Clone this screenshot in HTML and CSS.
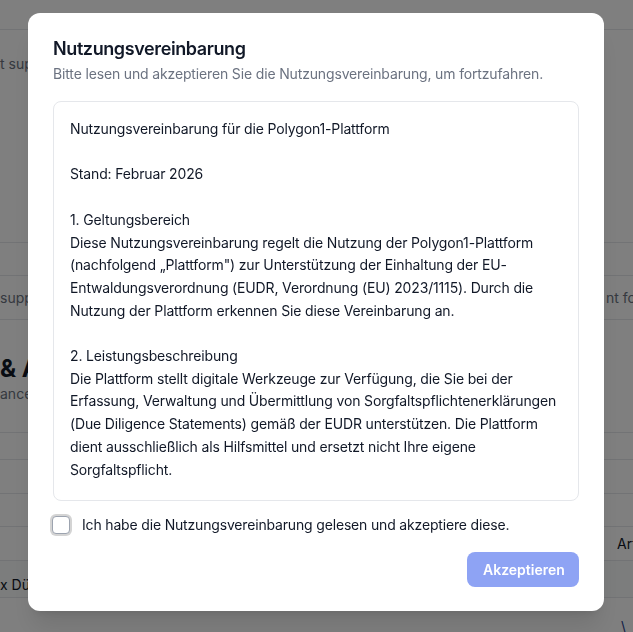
FILE: index.html
```html
<!DOCTYPE html>
<html lang="de">
<head>
<meta charset="utf-8">
<title>Nutzungsvereinbarung</title>
<link rel="stylesheet" href="styles.css">
</head>
<body>
<div class="page">
  <div class="row row-top"></div>
  <div class="row row-intro"><span class="muted">t support</span></div>
  <div class="row row-a"></div>
  <div class="row row-b"><span class="muted">support</span><span class="muted right-text">nt for</span></div>
  <div class="row row-heading">
    <div class="heading">&amp; Analysen</div>
    <div class="muted">ance</div>
  </div>
  <div class="row row-c"></div>
  <div class="row row-d"></div>
  <div class="row row-e"></div>
  <div class="row row-f"><span></span><span class="dark">Artikel</span></div>
  <div class="row row-g"><span class="dark">x Düngemittel</span></div>
  <div class="row row-h"><span></span><span class="link">\</span></div>
</div>

<div class="overlay">
  <div class="modal">
    <h2 class="modal-title">Nutzungsvereinbarung</h2>
    <p class="modal-subtitle">Bitte lesen und akzeptieren Sie die Nutzungsvereinbarung, um fortzufahren.</p>
    <div class="terms">Nutzungsvereinbarung für die Polygon1-Plattform

Stand: Februar 2026

1. Geltungsbereich
Diese Nutzungsvereinbarung regelt die Nutzung der Polygon1-Plattform (nachfolgend „Plattform") zur Unterstützung der Einhaltung der EU-Entwaldungsverordnung (EUDR, Verordnung (EU) 2023/1115). Durch die Nutzung der Plattform erkennen Sie diese Vereinbarung an.

2. Leistungsbeschreibung
Die Plattform stellt digitale Werkzeuge zur Verfügung, die Sie bei der Erfassung, Verwaltung und Übermittlung von Sorgfaltspflichtenerklärungen (Due Diligence Statements) gemäß der EUDR unterstützen. Die Plattform dient ausschließlich als Hilfsmittel und ersetzt nicht Ihre eigene Sorgfaltspflicht.

3. Registrierung und Zugang
Für die Nutzung der Plattform ist eine Registrierung erforderlich.</div>
    <label class="consent">
      <span class="checkbox"></span>
      <span class="consent-text">Ich habe die Nutzungsvereinbarung gelesen und akzeptiere diese.</span>
    </label>
    <div class="actions">
      <button class="btn-primary" disabled>Akzeptieren</button>
    </div>
  </div>
</div>
</body>
</html>
```

FILE: styles.css
```css
* { box-sizing: border-box; }

html, body {
  margin: 0;
  padding: 0;
  width: 633px;
  height: 632px;
  overflow: hidden;
  font-family: Inter, "Liberation Sans", sans-serif;
  background: #ffffff;
  color: #111827;
}

/* background page */
.page {
  display: flex;
  flex-direction: column;
  width: 633px;
}

.row {
  display: flex;
  justify-content: space-between;
  align-items: center;
  border-bottom: 1px solid #e5e7eb;
  font-size: 14px;
  line-height: 20px;
  white-space: nowrap;
  overflow: hidden;
}

.row-top { height: 30px; }
.row-intro { height: 213px; align-items: flex-start; padding-top: 24px; }
.row-a { height: 33px; }
.row-b { height: 44px; }
.row-b .right-text { width: 27px; overflow: hidden; }
.row-heading {
  height: 113px;
  flex-direction: column;
  align-items: flex-start;
  justify-content: flex-start;
  padding-top: 34px;
}
.row-c { height: 27px; }
.row-d { height: 34px; }
.row-e { height: 33px; }
.row-f { height: 34px; }
.row-f .dark { width: 16px; overflow: hidden; }
.row-g { height: 37px; background: #f9fafb; align-items: flex-end; padding-bottom: 2px; }
.row-h { height: 40px; align-items: flex-end; }
.row-h .link { width: 12px; color: #1e3a8a; }

.muted { color: #6b7280; }
.dark { color: #111827; }
.heading {
  font-size: 24px;
  line-height: 30px;
  font-weight: 700;
  color: #111827;
}

/* overlay + modal */
.overlay {
  position: fixed;
  inset: 0;
  background: rgba(0, 0, 0, 0.5);
  display: flex;
  justify-content: flex-start;
  align-items: flex-start;
  padding: 13px 0 0 28px;
}

.modal {
  width: 576px;
  background: #ffffff;
  border-radius: 12px;
  padding: 24px 25px;
  box-shadow: 0 20px 25px -5px rgba(0,0,0,0.1), 0 8px 10px -6px rgba(0,0,0,0.1);
  display: flex;
  flex-direction: column;
}

.modal-title {
  margin: -2px 0 0 0;
  font-size: 18px;
  line-height: 28px;
  font-weight: 600;
  letter-spacing: -0.4px;
  color: #111827;
}

.modal-subtitle {
  margin: 1px 0 0 0;
  font-size: 14px;
  line-height: 20px;
  letter-spacing: -0.15px;
  color: #6b7280;
}

.terms {
  margin-top: 17px;
  height: 400px;
  border: 1px solid #e5e7eb;
  border-radius: 8px;
  padding: 16px;
  font-size: 14px;
  line-height: 22.7px;
  letter-spacing: -0.15px;
  color: #111827;
  white-space: pre-wrap;
  overflow-y: auto;
  scrollbar-width: none;
}

.consent {
  margin-top: 14px;
  display: flex;
  align-items: center;
  gap: 12px;
  font-size: 14px;
  line-height: 20px;
  letter-spacing: -0.17px;
  color: #111827;
}

.checkbox {
  width: 18px;
  height: 18px;
  margin-left: -1px;
  border: 1px solid #9ca3af;
  border-radius: 4px;
  background: #ffffff;
  box-shadow: 0 0 0 2px #d4d4d4;
  flex: none;
}

.actions {
  margin-top: 17px;
  display: flex;
  justify-content: flex-end;
}

.btn-primary {
  font-family: inherit;
  font-size: 14px;
  line-height: 19px;
  font-weight: 600;
  color: #ffffff;
  background: #8ea3f4;
  border: none;
  border-radius: 8px;
  padding: 8px 16px;
  height: 35px;
  width: 112px;
}
```
